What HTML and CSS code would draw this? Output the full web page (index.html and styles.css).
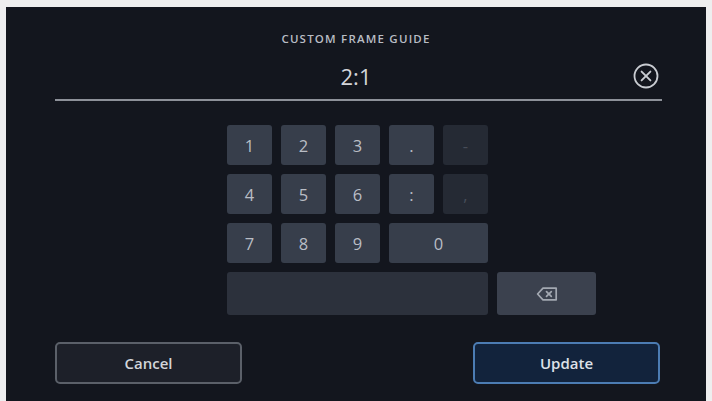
FILE: index.html
```html
<!DOCTYPE html>
<html>
<head>
<meta charset="utf-8">
<link rel="stylesheet" href="styles.css">
</head>
<body>
<div class="screen">
  <div class="title">CUSTOM FRAME GUIDE</div>
  <div class="field">
    <span class="spacer"></span>
    <span class="value">2:1</span>
    <span class="clear">
      <svg width="26" height="26" viewBox="0 0 26 26">
        <circle cx="13" cy="13" r="11.5" fill="none" stroke="#c9ccd2" stroke-width="1.8"/>
        <path d="M8.6 8.6 L17.4 17.4 M17.4 8.6 L8.6 17.4" stroke="#c9ccd2" stroke-width="1.9" stroke-linecap="round"/>
      </svg>
    </span>
  </div>
  <div class="keypad">
    <div class="key">1</div>
    <div class="key">2</div>
    <div class="key">3</div>
    <div class="key">.</div>
    <div class="key off">-</div>
    <div class="gap2"></div>
    <div class="key">4</div>
    <div class="key">5</div>
    <div class="key">6</div>
    <div class="key">:</div>
    <div class="key off">,</div>
    <div class="gap2"></div>
    <div class="key">7</div>
    <div class="key">8</div>
    <div class="key">9</div>
    <div class="key wide">0</div>
    <div class="gap2"></div>
    <div class="key space"></div>
    <div class="key back">
      <svg width="22" height="14" viewBox="0 0 22 14">
        <path d="M7 1.2 H20.2 V12.8 H7 L1.6 7 Z" fill="none" stroke="#a3a8b1" stroke-width="1.7" stroke-linejoin="round"/>
        <path d="M10.5 4.6 L15.3 9.4 M15.3 4.6 L10.5 9.4" stroke="#a3a8b1" stroke-width="1.7" stroke-linecap="round"/>
      </svg>
    </div>
  </div>
  <div class="actions">
    <div class="btn cancel">Cancel</div>
    <div class="btn update">Update</div>
  </div>
</div>
</body>
</html>
```
FILE: styles.css
```css
html, body {
  margin: 0;
  padding: 0;
}
body {
  background: #eeeeef;
  width: 712px;
  height: 401px;
  overflow: hidden;
  font-family: "Open Sans", "Noto Sans", sans-serif;
}
.screen {
  margin: 7px 6px 0 6px;
  height: 394px;
  background: #13161e;
  display: flex;
  flex-direction: column;
}
.title {
  margin-top: 25px;
  height: 14px;
  font-size: 11.5px;
  line-height: 14px;
  font-weight: 600;
  letter-spacing: 1.2px;
  text-align: center;
  color: #b9bdc5;
}
.field {
  margin: 7px 44px 0 49px;
  height: 46px;
  border-bottom: 2px solid #8d9199;
  display: grid;
  grid-template-columns: 1fr auto 1fr;
  align-items: center;
}
.value {
  font-size: 22px;
  font-weight: 400;
  color: #d3d5da;
  padding-right: 5px;
}
.clear {
  justify-self: end;
  margin-right: 3px;
  display: flex;
}
.keypad {
  margin: 24px 0 0 221px;
  display: grid;
  grid-template-columns: repeat(7, 45px);
  grid-template-rows: 40px 40px 40px 43px;
  gap: 9px;
}
.key {
  background: #373e4b;
  border-radius: 3px;
  display: flex;
  align-items: center;
  justify-content: center;
  color: #b9bdc5;
  font-size: 16.5px;
  font-weight: 400;
}
.key.off {
  background: #252a34;
  color: #474d59;
}
.gap2 {
  grid-column: span 2;
}
.key.wide {
  grid-column: span 2;
}
.key.space {
  grid-column: span 5;
  background: #2c313c;
}
.key.back {
  grid-column: span 2;
  background: #3b414e;
}
.actions {
  margin: 27px 46px 0 49px;
  display: flex;
  justify-content: space-between;
}
.btn {
  width: 187px;
  height: 42px;
  box-sizing: border-box;
  border-radius: 5px;
  border: 2px solid #5b6069;
  display: flex;
  align-items: center;
  justify-content: center;
  font-size: 15px;
  font-weight: 600;
  color: #d2d5da;
}
.cancel {
  background: #1d2029;
}
.update {
  background: #12233c;
  border-color: #4c7cb3;
  color: #dde1e8;
}
```
